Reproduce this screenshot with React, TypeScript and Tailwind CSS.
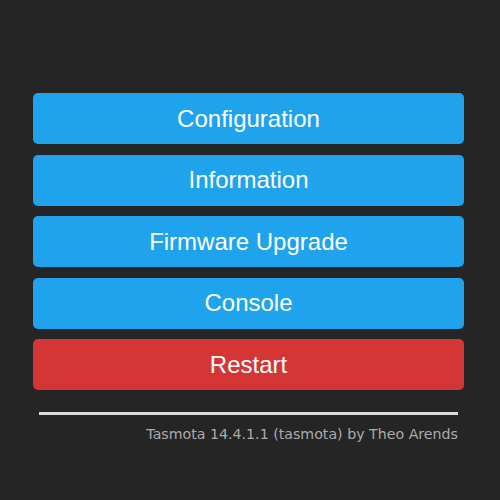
export default function App() {
  const btns = ["Configuration", "Information", "Firmware Upgrade", "Console"];
  return (
    <div className="w-[500px] h-[500px] bg-[#252525] pt-[93px] pl-[33px]" style={{ fontFamily: '"Liberation Sans", Arial, sans-serif' }}>
      <div className="w-[431px] flex flex-col gap-[10.5px]">
        {btns.map((b) => (
          <div key={b} className="h-[51px] rounded-[5px] bg-[#1fa3ec] text-white text-[24px] flex items-center justify-center">
            {b}
          </div>
        ))}
        <div className="h-[51px] rounded-[5px] bg-[#d43535] text-white text-[24px] flex items-center justify-center">
          Restart
        </div>
      </div>
      <div className="ml-[6px] w-[419px] mt-[22px] h-[3px] bg-[#dcdcdc]" />
      <div className="w-[425px] text-right text-[14.2px] text-[#aaaaaa] mt-[9px]" style={{ fontFamily: '"DejaVu Sans", sans-serif' }}>
        Tasmota 14.4.1.1 (tasmota) by Theo Arends
      </div>
    </div>
  );
}
